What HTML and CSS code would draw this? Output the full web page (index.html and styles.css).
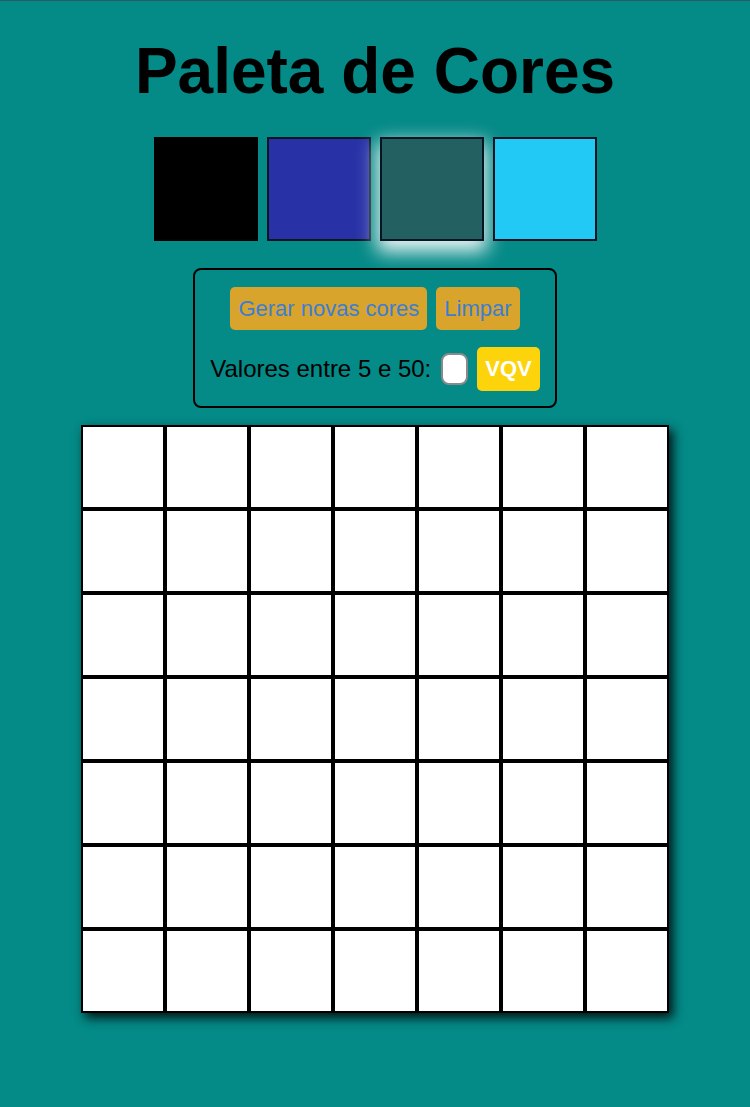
FILE: index.html
```html
<!DOCTYPE html>
<html lang="pt-BR">
<head>
<meta charset="utf-8">
<title>Paleta de Cores</title>
<link rel="stylesheet" href="styles.css">
</head>
<body>
<h1 class="title">Paleta de Cores</h1>
<div class="palette">
  <div class="color c-black"></div>
  <div class="color c-blue"></div>
  <div class="color c-teal selected"></div>
  <div class="color c-sky"></div>
</div>
<div class="controls">
  <div class="row">
    <button class="btn">Gerar novas cores</button>
    <button class="btn">Limpar</button>
  </div>
  <div class="row row-size">
    <label class="label">Valores entre 5 e 50:</label>
    <input class="size-input" type="number">
    <button class="vqv">VQV</button>
  </div>
</div>
<div class="board">
  <div class="px"></div><div class="px"></div><div class="px"></div><div class="px"></div><div class="px"></div><div class="px"></div><div class="px"></div>
  <div class="px"></div><div class="px"></div><div class="px"></div><div class="px"></div><div class="px"></div><div class="px"></div><div class="px"></div>
  <div class="px"></div><div class="px"></div><div class="px"></div><div class="px"></div><div class="px"></div><div class="px"></div><div class="px"></div>
  <div class="px"></div><div class="px"></div><div class="px"></div><div class="px"></div><div class="px"></div><div class="px"></div><div class="px"></div>
  <div class="px"></div><div class="px"></div><div class="px"></div><div class="px"></div><div class="px"></div><div class="px"></div><div class="px"></div>
  <div class="px"></div><div class="px"></div><div class="px"></div><div class="px"></div><div class="px"></div><div class="px"></div><div class="px"></div>
  <div class="px"></div><div class="px"></div><div class="px"></div><div class="px"></div><div class="px"></div><div class="px"></div><div class="px"></div>
</div>
</body>
</html>
```
FILE: styles.css
```css
html, body {
  margin: 0;
  padding: 0;
}
body {
  background: #048a87;
  border-top: 1px solid #2a5868;
  font-family: "Liberation Sans", Arial, sans-serif;
  min-height: 1106px;
  display: flex;
  flex-direction: column;
  align-items: center;
}
.title {
  margin: 32px 0 0;
  font-size: 64px;
  line-height: 76px;
  font-weight: bold;
  color: #000;
  text-align: center;
}
.palette {
  margin-top: 28px;
  display: flex;
  gap: 9px;
}
.color {
  width: 100px;
  height: 100px;
  border: 2px solid #0b1422;
}
.c-black { background: #000; border-color: #000; }
.c-blue { background: #2832a6; }
.c-teal { background: #236062; }
.c-sky { background: #22c9f5; }
.selected {
  box-shadow: 0 8px 18px 3px rgba(255, 255, 255, 0.9);
}
.controls {
  margin-top: 27px;
  width: 364px;
  height: 140px;
  border: 2px solid #000;
  border-radius: 8px;
  box-sizing: border-box;
  display: flex;
  flex-direction: column;
  align-items: center;
  padding-top: 17px;
  gap: 17px;
}
.row {
  display: flex;
  align-items: center;
  gap: 9px;
}
.btn {
  height: 43px;
  padding: 0 8px;
  border: none;
  border-radius: 5px;
  background: #d8a42b;
  color: #3c7ed6;
  font-family: "Liberation Sans", Arial, sans-serif;
  font-size: 22px;
}
.row-size {
  gap: 0;
}
.label {
  font-size: 24px;
  color: #000;
  margin-right: 10px;
}
.size-input {
  width: 27px;
  height: 32px;
  box-sizing: border-box;
  border: 2px solid #8a8a8a;
  border-radius: 8px;
  background: #fff;
  padding: 0;
  margin: 0 9px 0 0;
  -moz-appearance: textfield;
}
.size-input::-webkit-inner-spin-button,
.size-input::-webkit-outer-spin-button {
  -webkit-appearance: none;
  margin: 0;
}
.vqv {
  height: 44px;
  padding: 0 8px;
  border: none;
  border-radius: 5px;
  background: #fdd40c;
  color: #fff;
  font-family: "Liberation Sans", Arial, sans-serif;
  font-weight: bold;
  font-size: 22px;
}
.board {
  margin-top: 17px;
  display: grid;
  grid-template-columns: repeat(7, 84px);
  grid-auto-rows: 84px;
  box-shadow: 4px 5px 10px rgba(0, 0, 0, 0.85);
}
.px {
  background: #fff;
  border: 2px solid #000;
}
```
